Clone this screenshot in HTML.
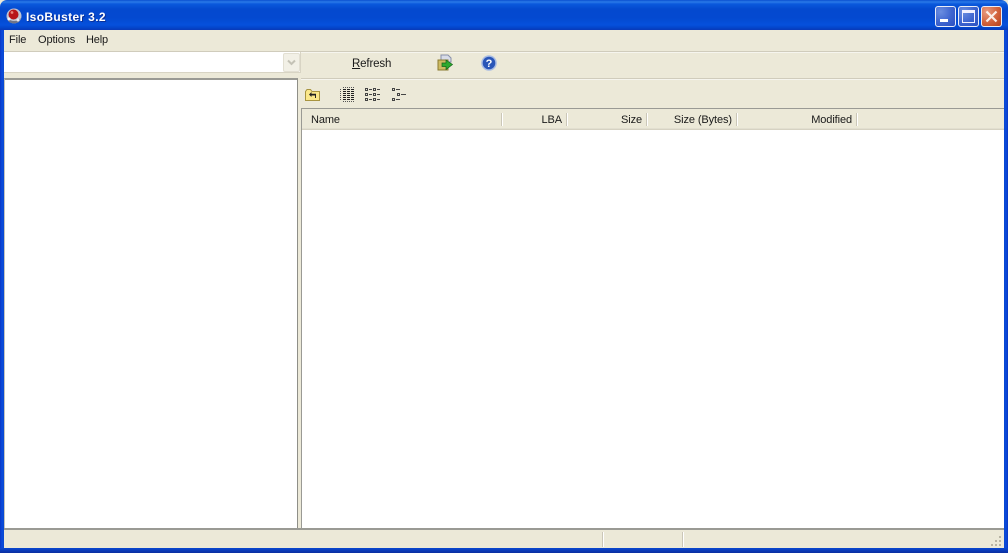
<!DOCTYPE html>
<html>
<head>
<meta charset="utf-8">
<title>IsoBuster 3.2</title>
<style>
html,body{margin:0;padding:0;width:1008px;height:553px;overflow:hidden;background:#ece9d8}
*{box-sizing:border-box}
body{position:relative;font-family:"Liberation Sans",sans-serif;font-size:11px;color:#1a1a1a}
.a{position:absolute}
.t{position:absolute;white-space:nowrap;line-height:13px}
.title{left:0;top:0;width:1008px;height:30px;border-radius:7px 7px 0 0;background:linear-gradient(180deg,#0a4fd0 0,#2a7ae8 2px,#0a58dc 4px,#0449cf 9px,#0449d0 18px,#0550dc 25px,#0444c8 28px,#0a3ab8 30px)}
.btn{top:6px;width:21px;height:21px;border:1px solid #e8ecf8;border-radius:3px}
.blue{background:radial-gradient(circle at 25% 25%,#6a8de0 0,#3d64cf 55%,#2a4fc0 100%)}
.red{background:radial-gradient(circle at 25% 25%,#e89a80 0,#d2623c 55%,#b5421c 100%)}
.hs{position:absolute;top:113px;width:2px;height:13px;background:linear-gradient(90deg,#cbc7b8 0,#cbc7b8 50%,#fff 50%,#fff 100%)}
</style>
</head>
<body>
<div class="a title"></div>

<!-- window frame -->
<div class="a" style="left:0;top:30px;width:4px;height:523px;background:linear-gradient(90deg,#0a36c4,#0a4bdc 50%,#0a48d0)"></div>
<div class="a" style="left:1004px;top:30px;width:4px;height:523px;background:linear-gradient(90deg,#0a48d0,#0a4bdc 50%,#0a36c4)"></div>
<div class="a" style="left:0;top:548px;width:1008px;height:5px;background:linear-gradient(180deg,#0a48d0,#0a3ab8 50%,#0a2ea0)"></div>

<!-- app icon -->
<svg class="a" style="left:5px;top:7px" width="18" height="18" viewBox="0 0 18 18">
  <circle cx="9" cy="9" r="7.5" fill="#c0c4d2"/>
  <path d="M2 11 Q9 17 16 11 L14 15 Q9 18 4 15Z" fill="#6f7488"/>
  <circle cx="8.5" cy="7.5" r="5" fill="#b8141a"/>
  <circle cx="7" cy="5.5" r="1.4" fill="#e88078"/>
  <circle cx="4" cy="12" r="1.5" fill="#f4f4f8"/>
  <circle cx="13" cy="13" r="1.5" fill="#e8e8f0"/>
</svg>
<div class="t" style="left:26px;top:10px;font-size:12px;font-weight:bold;color:#fff;letter-spacing:.35px;line-height:15px;text-shadow:1px 1px 0 #0a3098">IsoBuster 3.2</div>

<!-- caption buttons -->
<div class="a btn blue" style="left:935px"><div class="a" style="left:4px;top:12px;width:8px;height:3px;background:#fff"></div></div>
<div class="a btn blue" style="left:958px"><div class="a" style="left:3px;top:3px;width:13px;height:13px;border:1px solid #f0f0ff;border-top-width:3px"></div></div>
<div class="a btn red" style="left:981px">
  <svg class="a" style="left:3px;top:3px" width="13" height="13" viewBox="0 0 13 13"><path d="M1.5 1.5 L11.5 11.5 M11.5 1.5 L1.5 11.5" stroke="#fbeee8" stroke-width="2.2" fill="none"/></svg>
</div>

<!-- menu -->
<div class="t" style="left:9px;top:34px;letter-spacing:-.1px">File</div>
<div class="t" style="left:38px;top:34px;letter-spacing:-.1px">Options</div>
<div class="t" style="left:86px;top:34px;letter-spacing:-.15px">Help</div>
<div class="a" style="left:4px;top:51px;width:1000px;height:1px;background:#d0ccbc"></div>
<div class="a" style="left:4px;top:52px;width:1000px;height:1px;background:#f6f5ee"></div>

<!-- combo -->
<div class="a" style="left:4px;top:52px;width:297px;height:21px;background:#fff;border-bottom:1px solid #d8d4c4;border-right:1px solid #d8d4c4"></div>
<div class="a" style="left:283px;top:53px;width:17px;height:19px;background:#f2f0e6;border:1px solid #e2dfd2;border-radius:2px">
  <svg class="a" style="left:3px;top:5px" width="9" height="7" viewBox="0 0 9 7"><path d="M1 1.5 L4.5 5 L8 1.5" stroke="#c4c2b6" stroke-width="2" fill="none"/></svg>
</div>

<!-- refresh and icons -->
<div class="t" style="left:352px;top:58px;font-size:11.5px;letter-spacing:-.15px"><u>R</u>efresh</div>
<svg class="a" style="left:437px;top:54px" width="17" height="18" viewBox="0 0 17 18">
  <path d="M4 1 H11 L14 4 V8 H4Z" fill="#d8dce8" stroke="#8890a8"/>
  <path d="M1 6 H11 V16 H1Z" fill="#cdbb62" stroke="#8a7a30"/>
  <path d="M5 9 H9 V6 L15.5 10.5 L9 15.5 V12.5 H5Z" fill="#2eaa2e" stroke="#14661a" stroke-width=".7"/>
</svg>
<svg class="a" style="left:481px;top:55px" width="16" height="16" viewBox="0 0 16 16">
  <circle cx="8" cy="8" r="7.8" fill="#a8bce4"/>
  <circle cx="8" cy="8" r="6.3" fill="#2a56b8"/>
  <text x="8" y="12" font-family="Liberation Sans,sans-serif" font-size="11" font-weight="bold" fill="#fff" text-anchor="middle">?</text>
</svg>

<!-- left tree pane -->
<div class="a" style="left:4px;top:78px;width:294px;height:451px;background:#fff;border-top:2px solid #9a9a94;border-left:1px solid #c4c4be;border-right:1px solid #8f8f88"></div>

<!-- right toolbar -->
<div class="a" style="left:301px;top:78px;width:703px;height:1px;background:#d0ccbc"></div>
<div class="a" style="left:301px;top:79px;width:703px;height:1px;background:#f6f5ee"></div>

<svg class="a" style="left:305px;top:88px" width="16" height="14" viewBox="0 0 16 14">
  <path d="M.5 3.5 V12.5 H14.5 V3.5 H7 L5.5 1.5 H2 L.5 3.5Z" fill="#fbe88a" stroke="#a89440"/>
  <path d="M4 6.5 L6.5 4 V5.8 H11 V10 H10 V7.5 H6.5 V9Z" fill="#222"/>
</svg>
<svg class="a" style="left:339px;top:87px" width="16" height="15" viewBox="0 0 16 15" shape-rendering="crispEdges">
  <path d="M4 .5 H15 M1 2.5 H3 M1 4.5 H3 M1 6.5 H3 M1 8.5 H3 M1 10.5 H3 M1 12.5 H3 M4 14.5 H15" stroke="#555" stroke-dasharray="1 1" fill="none"/>
  <path d="M4 2.5 H15 M4 4.5 H15 M4 6.5 H15 M4 8.5 H15 M4 10.5 H15 M4 12.5 H15" stroke="#222" stroke-width="1" fill="none"/>
  <path d="M7.5 2 V13 M11.5 2 V13" stroke="#ece9d8"/>
</svg>
<svg class="a" style="left:365px;top:87px" width="16" height="15" viewBox="0 0 16 15" shape-rendering="crispEdges" fill="none" stroke="#444">
  <path d="M.5 1.5 h2 v2 h-2z M8.5 1.5 h2 v2 h-2z M.5 6.5 h2 v2 h-2z M8.5 6.5 h2 v2 h-2z M.5 11.5 h2 v2 h-2z M8.5 11.5 h2 v2 h-2z"/>
  <path d="M4 2.5 h3 M12 2.5 h3 M4 7.5 h3 M12 7.5 h3 M4 12.5 h3 M12 12.5 h3"/>
</svg>
<svg class="a" style="left:392px;top:87px" width="16" height="15" viewBox="0 0 16 15" shape-rendering="crispEdges" fill="none" stroke="#444">
  <path d="M.5 1.5 h2 v2 h-2z M5.5 6.5 h2 v2 h-2z M.5 11.5 h2 v2 h-2z"/>
  <path d="M4 2.5 h4 M9 7.5 h5 M4 12.5 h4"/>
</svg>

<!-- list pane -->
<div class="a" style="left:301px;top:108px;width:703px;height:421px;background:#fff;border-top:1px solid #9a9a94;border-left:1px solid #9a9a94"></div>
<div class="a" style="left:302px;top:109px;width:702px;height:21px;background:#ece9d8;border-bottom:1px solid #d6d2c2;box-shadow:inset 0 -1px 0 #e2dfd0"></div>
<div class="t" style="left:311px;top:114px;letter-spacing:-.1px">Name</div>
<div class="t" style="left:461px;top:114px;width:101px;text-align:right;letter-spacing:-.1px">LBA</div>
<div class="t" style="left:541px;top:114px;width:101px;text-align:right;letter-spacing:-.1px">Size</div>
<div class="t" style="left:631px;top:114px;width:101px;text-align:right;letter-spacing:-.1px">Size (Bytes)</div>
<div class="t" style="left:751px;top:114px;width:101px;text-align:right;letter-spacing:-.1px">Modified</div>
<div class="hs" style="left:501px"></div>
<div class="hs" style="left:566px"></div>
<div class="hs" style="left:646px"></div>
<div class="hs" style="left:736px"></div>
<div class="hs" style="left:856px"></div>

<!-- status bar -->
<div class="a" style="left:4px;top:528px;width:1000px;height:2px;background:#9a9a94"></div>
<div class="a" style="left:4px;top:530px;width:1000px;height:18px;background:#ece9d8"></div>
<div class="a" style="left:602px;top:532px;width:2px;height:15px;background:linear-gradient(90deg,#cbc7b8 50%,#fff 50%)"></div>
<div class="a" style="left:682px;top:532px;width:2px;height:15px;background:linear-gradient(90deg,#cbc7b8 50%,#fff 50%)"></div>
<svg class="a" style="left:991px;top:535px" width="12" height="12" viewBox="0 0 12 12" shape-rendering="crispEdges">
  <path d="M8 1h2v2H8z M4 5h2v2H4z M8 5h2v2H8z M0 9h2v2H0z M4 9h2v2H4z M8 9h2v2H8z" fill="#b8b4a4"/>
</svg>
</body>
</html>
